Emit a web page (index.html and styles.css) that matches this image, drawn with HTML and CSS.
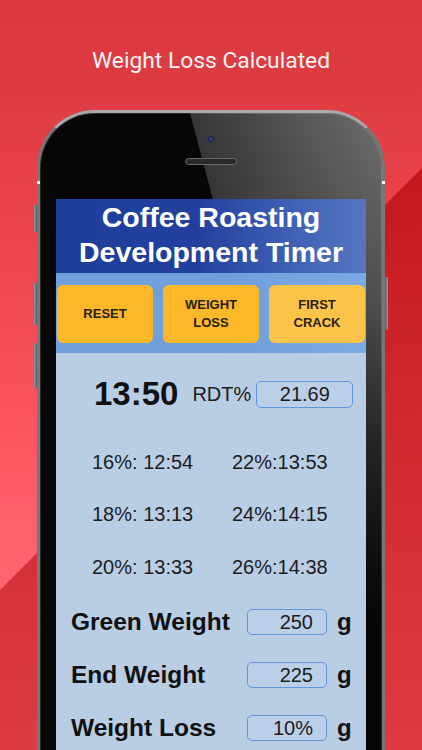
FILE: index.html
```html
<!DOCTYPE html>
<html lang="en">
<head>
<meta charset="utf-8">
<title>Weight Loss Calculated</title>
<link rel="stylesheet" href="styles.css">
</head>
<body>
<main class="page">
  <h1 class="caption">Weight Loss Calculated</h1>
  <div class="device">
    <span class="side-btn mute"></span>
    <span class="side-btn vol-up"></span>
    <span class="side-btn vol-down"></span>
    <span class="side-btn power"></span>
    <span class="antenna left"></span>
    <span class="antenna right"></span>
    <div class="phone">
      <div class="glare"></div>
      <div class="phone-top">
        <span class="camera"></span>
        <span class="speaker"></span>
      </div>
      <div class="screen">
        <header class="app-title">Coffee Roasting<br>Development Timer</header>
        <div class="actions">
          <button class="action">RESET</button>
          <button class="action">WEIGHT<br>LOSS</button>
          <button class="action">FIRST<br>CRACK</button>
        </div>
        <section class="panel">
          <div class="timer-row">
            <span class="time">13:50</span>
            <span class="rdt-label">RDT%</span>
            <span class="rdt-box">21.69</span>
          </div>
          <div class="targets">
            <span>16%: 12:54</span><span>22%:13:53</span>
            <span>18%: 13:13</span><span>24%:14:15</span>
            <span>20%: 13:33</span><span>26%:14:38</span>
          </div>
          <div class="weights">
            <span class="w-label">Green Weight</span><span class="w-box">250</span><span class="w-unit">g</span>
            <span class="w-label">End Weight</span><span class="w-box">225</span><span class="w-unit">g</span>
            <span class="w-label">Weight Loss</span><span class="w-box">10%</span><span class="w-unit">g</span>
          </div>
        </section>
      </div>
    </div>
  </div>
</main>
</body>
</html>
```
FILE: styles.css
```css
html, body {
  margin: 0;
  padding: 0;
}
body {
  width: 422px;
  height: 750px;
  overflow: hidden;
  position: relative;
  font-family: "Liberation Sans", Arial, sans-serif;
  background: linear-gradient(to bottom, #c2151c 0%, #c5191f 25%, #cf282f 55%, #dc3b43 100%);
}
body::before {
  content: "";
  position: absolute;
  inset: 0;
  clip-path: polygon(0 0, 590px 0, 0 590px);
  background: linear-gradient(to bottom, #da3940 0%, #dc3b42 10%, #ea424a 27%, #f84f59 50%, #ff5f69 68%, #ff6771 80%);
}
.page {
  position: relative;
  z-index: 1;
}
.caption {
  margin: 0;
  padding-top: 47px;
  font-family: Roboto, "Noto Sans", sans-serif;
  font-weight: 400;
  font-size: 22.8px;
  line-height: 28px;
  color: #fff4f4;
  text-align: center;
}
.device {
  position: relative;
  width: 348px;
  margin: 35px auto 0;
}
.side-btn {
  position: absolute;
  width: 3px;
  background: linear-gradient(to right, #9a9a9e, #5a5a5e);
  border-radius: 1px;
}
.mute { left: -3px; top: 95px; height: 27px; }
.vol-up { left: -3px; top: 172px; height: 43px; }
.vol-down { left: -3px; top: 233px; height: 45px; }
.power { right: -3px; top: 167px; height: 53px; background: linear-gradient(to right, #5a5a5e, #9a9a9e); }
.antenna {
  position: absolute;
  top: 71px;
  width: 3px;
  height: 3px;
  background: #f2f2f2;
  z-index: 2;
}
.antenna.left { left: 0; }
.antenna.right { right: 0; }
.phone {
  position: relative;
  height: 660px;
  border: 3px solid #77777b;
  border-top-color: #a9a9ad;
  border-bottom: 0;
  border-radius: 58px 58px 0 0;
  background: #060606;
  box-shadow: inset 0 0 0 1px #2c2c2e;
  overflow: hidden;
}
.glare {
  position: absolute;
  inset: 0;
  z-index: 0;
  pointer-events: none;
  clip-path: polygon(150px 0, 100% 0, 100% 100%, 325px 100%);
  background: linear-gradient(to right, rgba(255,255,255,0.2) 150px, rgba(255,255,255,0.42) 100%);
  -webkit-mask-image: linear-gradient(to bottom, #000 0, rgba(0,0,0,0.85) 100px, rgba(0,0,0,0.7) 190px, rgba(0,0,0,0.3) 330px, rgba(0,0,0,0.08) 450px, rgba(0,0,0,0) 520px);
  mask-image: linear-gradient(to bottom, #000 0, rgba(0,0,0,0.85) 100px, rgba(0,0,0,0.7) 190px, rgba(0,0,0,0.3) 330px, rgba(0,0,0,0.08) 450px, rgba(0,0,0,0) 520px);
}
.phone-top {
  position: relative;
  z-index: 1;
  height: 86px;
  box-sizing: border-box;
  padding-top: 23px;
  display: flex;
  flex-direction: column;
  align-items: center;
  gap: 16px;
}
.camera {
  width: 6px;
  height: 6px;
  border-radius: 50%;
  background: radial-gradient(circle at 50% 50%, #3a4aa0 0, #1c2460 60%, #20222c 100%);
}
.speaker {
  width: 52px;
  height: 7px;
  box-sizing: border-box;
  border-radius: 4px;
  border: 1px solid #6a6a6a;
  background: #2a2a2a;
}
.screen {
  position: relative;
  z-index: 1;
  width: 310px;
  height: 600px;
  margin: 0 auto;
  background: #b9cde5;
}
.app-title {
  padding: 1px 0 3px;
  background: linear-gradient(to right, #1f3f9d 0%, #223f9d 45%, #3a5ab0 70%, #5676c2 100%);
  color: #ffffff;
  font-weight: 700;
  font-size: 28.5px;
  line-height: 35px;
  text-align: center;
}
.actions {
  display: flex;
  justify-content: space-between;
  padding: 12px 1px 10px;
  background: linear-gradient(to right, #6fa0dc 0%, #6fa0dc 55%, #7aaae2 100%);
}
.action {
  width: 96px;
  height: 58px;
  border: 0;
  border-radius: 6px;
  background: #fdb829;
  color: #2a2112;
  font-family: "Liberation Sans", Arial, sans-serif;
  font-weight: 700;
  font-size: 13px;
  line-height: 18px;
  padding: 0;
}
.action:last-child {
  background: #fec349;
}
.panel {
  color: #1c1c1c;
}
.timer-row {
  display: flex;
  align-items: center;
  height: 40px;
  margin-top: 21px;
  padding-left: 38px;
}
.time {
  font-weight: 700;
  font-size: 33px;
  color: #111;
}
.rdt-label {
  margin-left: 14px;
  font-size: 20px;
}
.rdt-box {
  margin-left: 5px;
  width: 97px;
  height: 27px;
  box-sizing: border-box;
  border: 1px solid #5f95da;
  border-radius: 5px;
  background: #bccfe8;
  text-align: center;
  font-size: 20px;
  line-height: 25px;
}
.targets {
  display: grid;
  grid-template-columns: 140px auto;
  grid-auto-rows: 52.5px;
  align-items: center;
  margin-top: 22px;
  padding-left: 36px;
  font-size: 20px;
}
.weights {
  display: grid;
  grid-template-columns: 176px 80px auto;
  grid-auto-rows: 53px;
  align-items: center;
  margin-top: 2px;
  padding-left: 15px;
}
.w-label {
  font-weight: 700;
  font-size: 24.5px;
  color: #111;
}
.w-box {
  height: 26px;
  box-sizing: border-box;
  border: 1px solid #5f95da;
  border-radius: 5px;
  background: #bccfe8;
  text-align: right;
  padding-right: 13px;
  font-size: 20px;
  line-height: 24px;
}
.w-unit {
  margin-left: 10px;
  font-weight: 700;
  font-size: 24px;
  color: #111;
}
```
